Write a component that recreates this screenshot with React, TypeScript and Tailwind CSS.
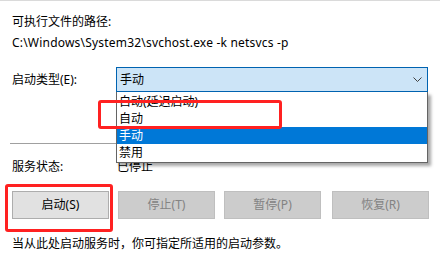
import React from "react";

const items = ["自动(延迟启动)", "自动", "手动", "禁用"];

const buttons = [
  { label: "启动(S)", enabled: true },
  { label: "停止(T)", enabled: false },
  { label: "暂停(P)", enabled: false },
  { label: "恢复(R)", enabled: false },
];

const App = () => {
  return (
    <div
      className="relative w-[440px] h-[273px] overflow-hidden bg-white border-t border-[#dadada] text-[12px] leading-4 text-black"
      style={{ fontFamily: '"Noto Sans", "Noto Sans CJK SC", sans-serif' }}
    >
      <div className="pt-[13px] pl-3">
        <div className="h-4">可执行文件的路径:</div>
        <div className="mt-[5px] h-4 tracking-[0.2px]">C:\Windows\System32\svchost.exe -k netsvcs -p</div>

        {/* startup type */}
        <div className="mt-4 flex items-center">
          <div className="w-[104px]">启动类型(E):</div>
          <div className="flex h-[25px] w-[312px] items-center justify-between border border-[#0063b1] bg-[#cce4f7] pl-[3px] pr-[5px]">
            <span>手动</span>
            <svg width="9" height="6" viewBox="0 0 9 6" className="mt-px">
              <path d="M0.5 0.5 L4.5 4.5 L8.5 0.5" fill="none" stroke="#404040" strokeWidth="1" />
            </svg>
          </div>
        </div>

        <div className="mt-[51px] -ml-[2px] mr-[12px] h-px bg-[#a0a0a0]" />

        <div className="mt-[15px] flex h-4">
          <div className="w-[105px]">服务状态:</div>
          <div>已停止</div>
        </div>

        <div className="mt-4 flex gap-[9px]">
          {buttons.map((b, i) => (
            <div
              key={b.label}
              className={
                b.enabled
                  ? "flex h-[28px] w-[97px] items-center justify-center border border-[#adadad] bg-[#e1e1e1] text-black"
                  : i === 3
                  ? "ml-[2px] flex h-[28px] w-[97px] items-center justify-center border border-[#bfbfbf] bg-[#cccccc] text-[#838383]"
                  : "flex h-[28px] w-[97px] items-center justify-center border border-[#bfbfbf] bg-[#cccccc] text-[#838383]"
              }
            >
              {b.label}
            </div>
          ))}
        </div>

        <div className="mt-[17px] h-4">当从此处启动服务时，你可指定所适用的启动参数。</div>
      </div>

      {/* open dropdown list */}
      <div className="absolute left-[116px] top-[91px] w-[312px] border-x border-b border-[#646464] bg-white pt-px pb-px shadow-[3px_3px_3px_rgba(0,0,0,0.35)]">
        {items.map((t) => (
          <div
            key={t}
            className={
              t === "手动"
                ? "h-[17px] bg-[#0078d7] pl-[2px] leading-[17px] text-white"
                : "h-[17px] pl-[2px] leading-[17px]"
            }
          >
            {t}
          </div>
        ))}
      </div>

      {/* red annotations */}
      <div className="absolute left-[98px] top-[99px] h-[29px] w-[184px] rounded-[3px] border-[3px] border-[#ff2121]" />
      <div className="absolute left-[5px] top-[183px] h-[48px] w-[108px] rounded-[3px] border-[3px] border-[#ff2121]" />
    </div>
  );
};

export default App;
